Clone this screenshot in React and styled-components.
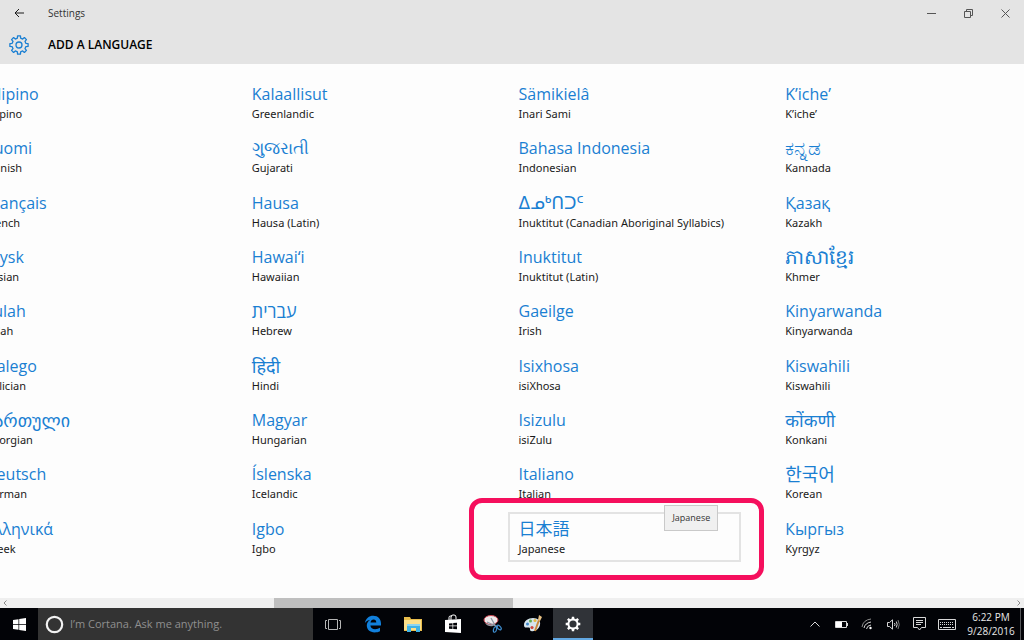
import React from "react";
import styled, { createGlobalStyle, css } from "styled-components";

const GlobalStyle = createGlobalStyle`
  *, *::before, *::after { box-sizing: border-box; }
  body {
    margin: 0;
    background: #fdfdfd;
    color: #1a1a1a;
    font-family: "Open Sans", "Noto Sans", "DejaVu Sans", "Noto Sans CJK JP", "Noto Sans CJK KR", sans-serif;
    overflow: hidden;
  }
  button, input { font-family: inherit; }
  h1, p, ul { margin: 0; padding: 0; }
`;

const Desktop = styled.div`
  display: flex;
  flex-direction: column;
  min-height: 100vh;
  overflow: hidden;
`;

const Header = styled.header`
  flex: none;
  height: 64px;
  background: #e4e4e4;
`;

const TitleBar = styled.div`
  display: flex;
  align-items: center;
  height: 26px;
`;

const PlainButton = styled.button`
  display: flex;
  align-items: center;
  justify-content: center;
  flex: none;
  padding: 0;
  border: 0;
  background: transparent;
  color: inherit;
`;

const BackButton = styled(PlainButton)`
  width: 38px;
  height: 26px;
`;

const WindowName = styled.p`
  flex: 1;
  padding-left: 10px;
  font-size: 10px;
  line-height: 16px;
  color: #333;
`;

const WindowButton = styled(PlainButton)`
  width: 37px;
  height: 26px;
  color: #555;
`;

const PageTitle = styled.div`
  display: flex;
  align-items: center;
  height: 38px;
`;

const TitleIcon = styled.span`
  display: flex;
  justify-content: center;
  width: 38px;
  color: #1a7fd2;
`;

const Heading = styled.h1`
  padding-left: 10px;
  font-size: 12px;
  line-height: 16px;
  font-weight: 600;
  color: #000;
`;

const Main = styled.main`
  flex: 1;
  display: flex;
  padding: 13px 0 36px;
  overflow: hidden;
`;

const LanguageGrid = styled.ul`
  flex: 1;
  display: grid;
  grid-auto-flow: column;
  grid-template-columns: repeat(4, minmax(0, 1fr));
  grid-template-rows: repeat(9, minmax(50px, 1fr));
  row-gap: 4px;
  margin: 0 -17px 0 -26px;
  list-style: none;
`;

const LanguageCell = styled.li`
  position: relative;
  display: flex;
  padding-right: 33px;
`;

const LanguageButton = styled.button`
  flex: 1;
  min-width: 0;
  display: flex;
  flex-direction: column;
  align-items: flex-start;
  padding: 3px 0 0 9px;
  border: 2px solid ${(p) => (p.$hovered ? "#e3e3e3" : "transparent")};
  background: transparent;
  text-align: left;
  white-space: nowrap;
`;

const NativeName = styled.span`
  font-size: ${(p) => p.$size}px;
  line-height: 24px;
  height: 24px;
  color: #1a7fd2;
`;

const EnglishName = styled.span`
  font-family: "Noto Sans", "Open Sans", sans-serif;
  font-size: 11px;
  line-height: 16px;
  color: #1a1a1a;
`;

const Highlight = styled.div`
  position: absolute;
  inset: -14px 10px -18px -39px;
  border: 5px solid #f50f5d;
  border-radius: 13px;
  pointer-events: none;
`;

const Tooltip = styled.div`
  position: absolute;
  top: -7px;
  right: 56px;
  padding: 4px 7px;
  border: 1px solid #c9c9c9;
  background: #f0f0f0;
  font-size: 9px;
  line-height: 16px;
  color: #333;
`;

const ScrollBar = styled.div`
  flex: none;
  display: flex;
  height: 10px;
  background: #efefef;
  color: #8a8a8a;
`;

const ScrollButton = styled(PlainButton)`
  width: 10px;
  height: 10px;
`;

const ScrollTrack = styled.div`
  flex: 1;
`;

const ScrollThumb = styled.div`
  width: 23.8%;
  height: 10px;
  margin-left: 26.3%;
  background: #bfbfbf;
`;

const TaskBar = styled.footer`
  flex: none;
  display: flex;
  height: 32px;
  background: #020307;
  color: #fff;
`;

const StartButton = styled(PlainButton)`
  width: 38px;
`;

const SearchBox = styled.label`
  flex: 0 1 275px;
  display: flex;
  align-items: center;
  gap: 6px;
  padding-left: 7px;
  background: #333;
`;

const SearchInput = styled.input`
  flex: 1;
  min-width: 0;
  padding: 0;
  border: 0;
  outline: 0;
  background: transparent;
  color: #fff;
  font-size: 11px;
  line-height: 16px;
  &::placeholder { color: #8f8f8f; opacity: 1; }
`;

const TaskButton = styled(PlainButton)`
  width: 40px;
  ${(p) =>
    p.$active &&
    css`
      background: #303338;
      box-shadow: inset 0 -2px #62a8e2;
    `}
`;

const Tray = styled.div`
  display: flex;
  margin-left: auto;
  color: #d8d8d8;
`;

const TrayButton = styled(PlainButton)`
  width: ${(p) => (p.$wide ? "30px" : "26px")};
`;

const Clock = styled.time`
  display: flex;
  flex-direction: column;
  justify-content: center;
  width: 58px;
  text-align: center;
  font-size: 10px;
  line-height: 14px;
  color: #e8e8e8;
  white-space: nowrap;
`;

const ShowDesktop = styled(PlainButton)`
  width: 4px;
  border-left: 1px solid #55575a;
`;

/* Native name, English name and, where the script needs it, a larger text size. */
const languages = [
  ["Filipino", "Filipino"],
  ["Suomi", "Finnish"],
  ["Français", "French"],
  ["Frysk", "Frisian"],
  ["Fulah", "Fulah"],
  ["Galego", "Galician"],
  ["ქართული", "Georgian", 18],
  ["Deutsch", "German"],
  ["Ελληνικά", "Greek"],
  ["Kalaallisut", "Greenlandic"],
  ["ગુજરાતી", "Gujarati", 17],
  ["Hausa", "Hausa (Latin)"],
  ["Hawaiʻi", "Hawaiian"],
  ["עברית", "Hebrew", 18],
  ["हिंदी", "Hindi", 18],
  ["Magyar", "Hungarian"],
  ["Íslenska", "Icelandic"],
  ["Igbo", "Igbo"],
  ["Sämikielâ", "Inari Sami"],
  ["Bahasa Indonesia", "Indonesian"],
  ["ᐃᓄᒃᑎᑐᑦ", "Inuktitut (Canadian Aboriginal Syllabics)", 17],
  ["Inuktitut", "Inuktitut (Latin)"],
  ["Gaeilge", "Irish"],
  ["Isixhosa", "isiXhosa"],
  ["Isizulu", "isiZulu"],
  ["Italiano", "Italian"],
  ["日本語", "Japanese", 17],
  ["K’iche’", "K’iche’"],
  ["ಕನ್ನಡ", "Kannada", 20],
  ["Қазақ", "Kazakh"],
  ["ភាសាខ្មែរ", "Khmer", 20],
  ["Kinyarwanda", "Kinyarwanda"],
  ["Kiswahili", "Kiswahili"],
  ["कोंकणी", "Konkani", 18],
  ["한국어", "Korean", 18],
  ["Кыргыз", "Kyrgyz"],
];

const Svg = ({ w, h, children, ...rest }) => (
  <svg width={w} height={h} viewBox={`0 0 ${w} ${h}`} fill="none" stroke="currentColor" aria-hidden="true" {...rest}>
    {children}
  </svg>
);

/* Gear outline with eight squared teeth, generated around a centre point. */
const gearPath = (c, outer, inner, teeth = 8) => {
  const pts = [];
  const step = (Math.PI * 2) / teeth;
  for (let i = 0; i < teeth; i++) {
    const a = i * step - Math.PI / 2;
    [[-0.3, inner], [-0.2, outer], [0.2, outer], [0.3, inner]].forEach(([t, r]) => {
      pts.push(`${(c + r * Math.cos(a + t * step)).toFixed(2)} ${(c + r * Math.sin(a + t * step)).toFixed(2)}`);
    });
  }
  return `M${pts.join("L")}Z`;
};

const EdgeIcon = () => (
  <Svg w={18} h={18} stroke="none">
    <path
      fill="#1180dc"
      d="M1 8C1.600 3.500 5 .8 9.200 .8C14.200 .8 17 4.300 17 8.700V10.500H6.400C6.600 13 8.600 14.200 11.100 14.200C13.100 14.200 14.700 13.600 16 12.800V16.200C14.500 17 12.700 17.400 10.600 17.400C5.900 17.400 2.800 14.700 2.800 10.600C2.800 8 4.100 5.900 6.400 4.700C4.100 5 2.200 6.200 1 8ZM6.500 7.500H12.300C12.300 5.700 11.300 4.500 9.600 4.500C7.900 4.500 6.800 5.700 6.500 7.500Z"
    />
  </Svg>
);

const FolderIcon = () => (
  <Svg w={18} h={16} stroke="none">
    <path fill="#e9bd4c" d="M0 1H6L7 3H18V15H0Z" />
    <path fill="#fbe08b" d="M0 4H17V14H0Z" />
    <path fill="#3fb3e6" d="M3 8H16V16H12V12H7V16H3Z" />
    <path fill="#8bd5f2" d="M3 8H16V10H3Z" />
  </Svg>
);

const StoreIcon = () => (
  <Svg w={18} h={20} stroke="none">
    <path fill="#fff" d="M1 6L17 5V19L1 18Z" />
    <path stroke="#fff" strokeWidth="1" fill="none" d="M5 6V3.500Q5 2 6.500 2H8M7 6V3Q7 1 9 1H10Q12 1 12 3V5" />
    <path fill="#020307" d="M5 9.500L8.500 9.200V11.500H5ZM9.200 9.100L13 8.800V11.500H9.200ZM5 12.300H8.500V15L5 14.700ZM9.200 12.300H13V15.300L9.200 15Z" />
  </Svg>
);

const SnipIcon = () => (
  <Svg w={20} h={20} stroke="none">
    <ellipse cx="8" cy="6" rx="7" ry="4.500" fill="#eeeaea" stroke="#c94450" />
    <path fill="#9a9da6" d="M2 9Q7 12 12 10L10 12Q5 13 2 9Z" />
    <path stroke="#8d97a5" strokeWidth="1.300" d="M8 4L13 13M4 8L15 13" />
    <ellipse cx="12" cy="15.500" rx="1.500" ry="2.800" stroke="#3f8fd2" strokeWidth="1.200" transform="rotate(15 12 15.500)" />
    <ellipse cx="16" cy="13.500" rx="1.500" ry="2.800" stroke="#3f8fd2" strokeWidth="1.200" transform="rotate(-45 16 13.500)" />
  </Svg>
);

const PaintIcon = () => (
  <Svg w={20} h={18} stroke="none">
    <path fill="#d6e4ec" d="M1 10C1 6 5 3 10 3S18 6 17 10C16 14 12 17 8 16C6 15.500 8 13 6 12.500C4 12 1 14 1 10Z" />
    <circle cx="4.500" cy="9" r="1.500" fill="#3f87c8" />
    <circle cx="7.500" cy="6" r="1.500" fill="#5bab52" />
    <circle cx="12" cy="5.500" r="1.500" fill="#e5b93c" />
    <circle cx="9" cy="12.500" r="1.600" fill="#d0463c" />
    <path stroke="#c8893c" strokeWidth="2" d="M12 16L16 5" />
    <path fill="#e8c184" d="M15 5L16 0L19 2L17 6Z" />
  </Svg>
);

const LanguageItem = ({ native, english, size = 16 }) => {
  const hovered = english === "Japanese";
  return (
    <LanguageCell>
      <LanguageButton type="button" $hovered={hovered}>
        <NativeName $size={size}>{native}</NativeName>
        <EnglishName>{english}</EnglishName>
      </LanguageButton>
      {hovered && <Highlight />}
      {hovered && <Tooltip role="tooltip">{english}</Tooltip>}
    </LanguageCell>
  );
};

export default function App() {
  return (
    <Desktop>
      <GlobalStyle />
      <Header>
        <TitleBar>
          <BackButton type="button" aria-label="Back">
            <Svg w={10} h={10}><path d="M10 5H1M5 1L1 5L5 9" /></Svg>
          </BackButton>
          <WindowName>Settings</WindowName>
          <WindowButton type="button" aria-label="Minimize">
            <Svg w={9} h={9}><path d="M0 4.500H9" /></Svg>
          </WindowButton>
          <WindowButton type="button" aria-label="Restore">
            <Svg w={9} h={9}><path d="M.5 2.500H6.500V8.500H.5ZM2.500 2V.5H8.500V6.500H7" /></Svg>
          </WindowButton>
          <WindowButton type="button" aria-label="Close">
            <Svg w={9} h={9}><path d="M.5 .5L8.500 8.500M8.500 .5L.5 8.500" /></Svg>
          </WindowButton>
        </TitleBar>
        <PageTitle>
          <TitleIcon>
            <Svg w={20} h={20} strokeWidth="1.300" strokeLinejoin="round">
              <path d={gearPath(10, 9.2, 7)} />
              <circle cx="10" cy="10" r="3" />
            </Svg>
          </TitleIcon>
          <Heading>ADD A LANGUAGE</Heading>
        </PageTitle>
      </Header>

      <Main>
        <LanguageGrid>
          {languages.map(([native, english, size]) => (
            <LanguageItem key={english} native={native} english={english} size={size} />
          ))}
        </LanguageGrid>
      </Main>

      <ScrollBar>
        <ScrollButton type="button" aria-label="Scroll left">
          <Svg w={4} h={6}><path d="M3.500 .5L1 3L3.500 5.500" /></Svg>
        </ScrollButton>
        <ScrollTrack><ScrollThumb /></ScrollTrack>
        <ScrollButton type="button" aria-label="Scroll right">
          <Svg w={4} h={6}><path d="M.5 .5L3 3L.5 5.500" /></Svg>
        </ScrollButton>
      </ScrollBar>

      <TaskBar>
        <StartButton type="button" aria-label="Start">
          <Svg w={13} h={13} fill="#fff" stroke="none">
            <path d="M0 2L5.500 1.200V6H0ZM6.200 1.100L13 0V6H6.200ZM0 6.800H5.500V11.800L0 11ZM6.200 6.800H13V13L6.200 11.900Z" />
          </Svg>
        </StartButton>
        <SearchBox>
          <Svg w={19} h={19} stroke="#f2f2f2" strokeWidth="2.200"><circle cx="9.500" cy="9.500" r="7.700" /></Svg>
          <SearchInput type="text" aria-label="Search" placeholder="I’m Cortana. Ask me anything." />
        </SearchBox>
        <TaskButton type="button" aria-label="Task view">
          <Svg w={16} h={11} stroke="#b5b5b5"><path d="M3.500 .5H12.500V10.500H3.500ZM2 1.500H.5V9.500H2M14 1.500H15.500V9.500H14" /></Svg>
        </TaskButton>
        <TaskButton type="button" aria-label="Edge"><EdgeIcon /></TaskButton>
        <TaskButton type="button" aria-label="File Explorer"><FolderIcon /></TaskButton>
        <TaskButton type="button" aria-label="Store"><StoreIcon /></TaskButton>
        <TaskButton type="button" aria-label="Snipping Tool"><SnipIcon /></TaskButton>
        <TaskButton type="button" aria-label="Paint"><PaintIcon /></TaskButton>
        <TaskButton type="button" aria-label="Settings" $active>
          <Svg w={16} h={16} stroke="none">
            <path fill="#fff" fillRule="evenodd" d={`${gearPath(8, 7.4, 5.6)}M8 4.400A3.600 3.600 0 1 0 8 11.600A3.600 3.600 0 1 0 8 4.400Z`} />
          </Svg>
        </TaskButton>
        <Tray>
          <TrayButton type="button" aria-label="Show hidden icons">
            <Svg w={10} h={6}><path d="M.5 5.500L5 1L9.500 5.500" /></Svg>
          </TrayButton>
          <TrayButton type="button" aria-label="Battery">
            <Svg w={13} h={7}><path d="M.5 .5H11.500V6.500H.5ZM12.500 2V5" /><path d="M1 1H7V6H1Z" fill="#fff" stroke="none" /></Svg>
          </TrayButton>
          <TrayButton type="button" aria-label="Network">
            <Svg w={12} h={12}>
              <path d="M1 9Q2 2 10 1" stroke="#8e8e8e" />
              <path d="M3 10Q4 5 10 4M5.500 11Q6 7.500 10 7" />
              <circle cx="9.500" cy="10" r="1.200" fill="#fff" stroke="none" />
            </Svg>
          </TrayButton>
          <TrayButton type="button" aria-label="Volume">
            <Svg w={13} h={11}>
              <path d="M.5 3.500H2.500L5.500 .8V10.200L2.500 7.500H.5Z" />
              <path d="M7.500 4Q8.500 5.500 7.500 7M9.300 2.500Q11 5.500 9.300 8.500" />
              <path d="M11 1Q13.500 5.500 11 10" stroke="#777" />
            </Svg>
          </TrayButton>
          <TrayButton type="button" aria-label="Notifications">
            <Svg w={13} h={14}><path d="M.5 .5H12.500V10.500H8.500L6.500 13L4.500 10.500H.5ZM3 3.500H10M3 5.500H10M3 7.500H8" /></Svg>
          </TrayButton>
          <TrayButton type="button" aria-label="Touch keyboard" $wide>
            <Svg w={18} h={11}>
              <path d="M.5 .5H17.500V10.500H.5Z" />
              <path d="M2 3.500H16M2 5.500H16" strokeDasharray="1 1" />
              <path d="M2 8.500H4M5 8.500H13M14 8.500H16" />
            </Svg>
          </TrayButton>
          <Clock>
            <span>6:22 PM</span>
            <span>9/28/2016</span>
          </Clock>
          <ShowDesktop type="button" aria-label="Show desktop" />
        </Tray>
      </TaskBar>
    </Desktop>
  );
}
